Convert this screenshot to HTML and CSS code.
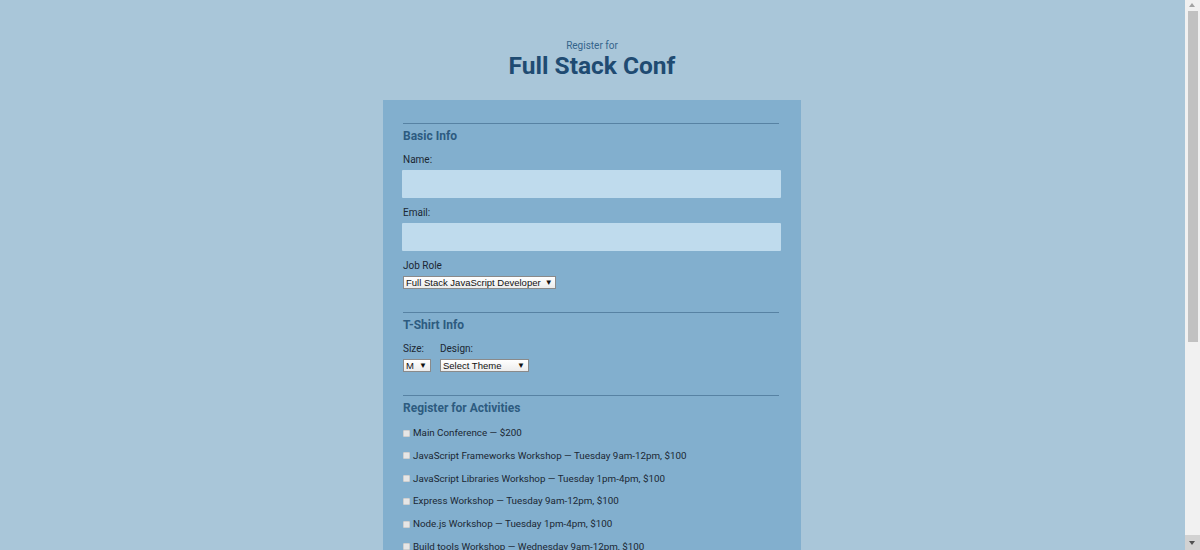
FILE: index.html
```html
<!DOCTYPE html>
<html>
<head>
<meta charset="utf-8">
<link rel="stylesheet" href="styles.css">
</head>
<body>
<header class="page-head">
  <span class="pre">Register for</span>
  <h1 class="title">Full Stack Conf</h1>
</header>
<form class="form">
  <section class="sec">
    <hr class="rule">
    <h2 class="legend">Basic Info</h2>
    <div class="label first">Name:</div>
    <div class="input"></div>
    <div class="label">Email:</div>
    <div class="input"></div>
    <div class="label">Job Role</div>
    <span class="sel sel-role"><span>Full Stack JavaScript Developer</span><span class="arr">▼</span></span>
  </section>
  <section class="sec">
    <hr class="rule">
    <h2 class="legend">T-Shirt Info</h2>
    <div class="shirt">
      <div class="col col-size">
        <div class="label first">Size:</div>
        <span class="sel sel-size"><span>M</span><span class="arr">▼</span></span>
      </div>
      <div class="col">
        <div class="label first">Design:</div>
        <span class="sel sel-theme"><span>Select Theme</span><span class="arr">▼</span></span>
      </div>
    </div>
  </section>
  <section class="sec">
    <hr class="rule">
    <h2 class="legend">Register for Activities</h2>
    <ul class="acts">
      <li><span class="cb"></span>Main Conference — $200</li>
      <li><span class="cb"></span>JavaScript Frameworks Workshop — Tuesday 9am-12pm, $100</li>
      <li><span class="cb"></span>JavaScript Libraries Workshop — Tuesday 1pm-4pm, $100</li>
      <li><span class="cb"></span>Express Workshop — Tuesday 9am-12pm, $100</li>
      <li><span class="cb"></span>Node.js Workshop — Tuesday 1pm-4pm, $100</li>
      <li><span class="cb"></span>Build tools Workshop — Wednesday 9am-12pm, $100</li>
      <li><span class="cb"></span>npm Workshop — Wednesday 1pm-4pm, $100</li>
    </ul>
  </section>
  <section class="sec">
    <hr class="rule">
    <h2 class="legend">Payment Info</h2>
    <div class="label first">I'm going to pay with:</div>
    <span class="sel sel-pay"><span>Select Payment Method</span><span class="arr">▼</span></span>
  </section>
  <div class="actions"><span class="btn">Register</span></div>
</form>
<div class="scrollbar" aria-hidden="true">
  <span class="sb-up"></span>
  <span class="sb-thumb"></span>
  <span class="sb-down"><span class="sb-down-tri"></span></span>
</div>
</body>
</html>
```
FILE: styles.css
```css
html, body {
  margin: 0;
  padding: 0;
}
body {
  background: #a9c6d9;
  font-family: Roboto, "Liberation Sans", sans-serif;
  color: #1b2733;
  margin-right: 16px;
}
.scrollbar {
  position: fixed;
  top: 0;
  right: 0;
  width: 15px;
  height: 100%;
  background: #f1f1f1;
}
.sb-up {
  position: absolute;
  top: 3px;
  left: 4px;
  width: 0;
  height: 0;
  border-left: 3.5px solid transparent;
  border-right: 3.5px solid transparent;
  border-bottom: 4px solid #a3a3a3;
}
.sb-thumb {
  position: absolute;
  top: 11px;
  left: 3px;
  width: 10px;
  height: 331px;
  background: #c1c1c1;
}
.sb-down {
  position: absolute;
  bottom: 0;
  left: 0;
  width: 15px;
  height: 15px;
  background: #d2d2d2;
}
.sb-down-tri {
  position: absolute;
  top: 6px;
  left: 4px;
  width: 0;
  height: 0;
  border-left: 3.5px solid transparent;
  border-right: 3.5px solid transparent;
  border-top: 4px solid #505050;
}
.page-head {
  display: flex;
  flex-direction: column;
  align-items: center;
  padding-top: 40px;
  height: 60px;
  box-sizing: border-box;
}
.pre {
  font-size: 10px;
  line-height: 12px;
  color: #35648b;
}
.title {
  margin: 0;
  font-size: 24.5px;
  line-height: 27px;
  font-weight: 700;
  color: #1f4b72;
}
.form {
  display: block;
  width: 418px;
  margin: 40px auto 0;
  background: #82afce;
  padding: 23px 20px 40px 19px;
  box-sizing: border-box;
}
.sec {
  display: flex;
  flex-direction: column;
  align-items: flex-start;
  padding-bottom: 23px;
}
.rule {
  align-self: stretch;
  margin: 0 2px 0 1px;
  border: 0;
  height: 1px;
  background: #5782a3;
}
.legend {
  margin: 5px 0 0 1px;
  font-size: 12px;
  line-height: 14px;
  font-weight: 700;
  color: #2d5b80;
}
.label {
  margin: 9px 0 4px 1px;
  font-size: 10px;
  line-height: 12px;
}
.label.first {
  margin-top: 11px;
}
.input {
  align-self: stretch;
  height: 28px;
  background: #bfdbed;
  border-radius: 1px;
}
.sel {
  display: inline-flex;
  align-items: center;
  justify-content: space-between;
  white-space: nowrap;
  height: 13px;
  box-sizing: border-box;
  margin-left: 1px;
  padding: 0 3px 0 2px;
  background: linear-gradient(#ffffff, #ececec);
  border: 1px solid #8a8a8a;
  font-family: "Liberation Sans", Arial, sans-serif;
  font-size: 9.5px;
  line-height: 11px;
  color: #111;
}
.arr {
  font-size: 8px;
  margin-left: 4px;
}
.sel-role { width: 153px; }
.sel-size { width: 28px; }
.sel-theme { width: 89px; }
.sel-pay { width: 120px; }
.shirt {
  display: flex;
  gap: 9px;
}
.col {
  display: flex;
  flex-direction: column;
  align-items: flex-start;
}
.col-size { width: 28px; }
.acts {
  list-style: none;
  margin: 12px 0 0;
  padding: 0;
  display: flex;
  flex-direction: column;
  gap: 10.8px;
}
.acts li {
  display: flex;
  align-items: center;
  font-size: 9.8px;
  line-height: 12px;
}
.cb {
  width: 7px;
  height: 7px;
  box-sizing: border-box;
  background: #e6e6e6;
  border: 1px solid #cfcfcf;
  border-radius: 1px;
  margin: 0 3px 0 1px;
}
.actions {
  display: flex;
  justify-content: center;
}
.btn {
  padding: 8px 30px;
  background: #22547d;
  color: #fff;
  font-size: 12px;
  border-radius: 3px;
}
```
